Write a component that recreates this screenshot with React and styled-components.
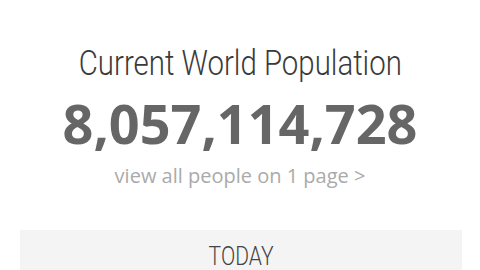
import React from "react";
import styled, { createGlobalStyle } from "styled-components";

const GlobalStyle = createGlobalStyle`
    html, body {
        margin: 0;
        padding: 0;
        background: #fff;
        overflow: hidden;
    }
`;

const App = () => {
    return (
        <>
            <GlobalStyle />
            <StyledPage>
                <StyledCounter>
                    <StyledTitle>Current World Population</StyledTitle>
                    <StyledNumber>8,057,114,728</StyledNumber>
                    <StyledLink href="#">view all people on 1 page &gt;</StyledLink>
                </StyledCounter>
                <StyledPanel>
                    <StyledPanelTitle>TODAY</StyledPanelTitle>
                </StyledPanel>
            </StyledPage>
        </>
    );
};

export default App;

const StyledPage = styled.div`
    width: 480px;
    height: 270px;
    display: flex;
    flex-direction: column;
    overflow: hidden;
`;
const StyledCounter = styled.div`
    display: flex;
    flex-direction: column;
    align-items: center;
    padding-top: 44px;
    height: 186px;
    box-sizing: border-box;
`;
/* condensed look: Roboto Light squeezed horizontally */
const StyledTitle = styled.h1`
    margin: 0;
    font-family: Roboto, "Liberation Sans", sans-serif;
    font-weight: 300;
    font-size: 35px;
    line-height: 40px;
    color: #3a3a3a;
    white-space: nowrap;
    transform: scaleX(0.84);
`;
const StyledNumber = styled.div`
    margin-top: 9px;
    font-family: "Open Sans", "Liberation Sans", sans-serif;
    font-weight: 700;
    font-size: 54px;
    line-height: 60px;
    color: #666;
`;
const StyledLink = styled.a`
    margin-top: 10px;
    font-family: "Open Sans", "Liberation Sans", sans-serif;
    font-size: 20px;
    line-height: 26px;
    color: #aaa;
    text-decoration: none;
`;
const StyledPanel = styled.div`
    margin: 44px 18px 0 20px;
    flex: 1;
    background: #f4f4f4;
    display: flex;
    justify-content: center;
`;
const StyledPanelTitle = styled.div`
    padding-top: 11px;
    font-family: Roboto, "Liberation Sans", sans-serif;
    font-weight: 300;
    font-size: 26px;
    line-height: 30px;
    color: #444;
    transform: scaleX(0.81);
`;
